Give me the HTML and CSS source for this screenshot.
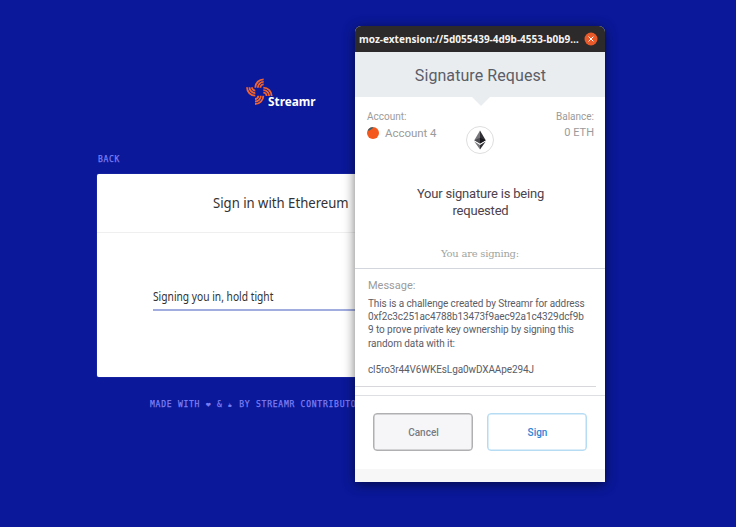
FILE: index.html
```html
<!DOCTYPE html>
<html lang="en">
<head>
<meta charset="utf-8">
<title>Sign in with Ethereum</title>
<link rel="stylesheet" href="styles.css">
</head>
<body>
<main class="page">
  <svg class="logo" viewBox="0 0 270 150" role="img" aria-label="Streamr">
    <defs>
      <g id="petal">
        <path d="M-12 -12A25 25 0 0 1 13 -37"/>
        <path d="M-4.500 -12A17.500 17.500 0 0 1 13 -29.500"/>
        <path d="M3 -12A10 10 0 0 1 13 -22"/>
      </g>
    </defs>
    <g class="logo-mark" transform="translate(73 65)">
      <use href="#petal"/>
      <use href="#petal" transform="rotate(90)"/>
      <use href="#petal" transform="rotate(180)"/>
      <use href="#petal" transform="rotate(270)"/>
    </g>
    <text class="logo-name" x="99" y="108" textLength="143" lengthAdjust="spacingAndGlyphs">Streamr</text>
  </svg>
  <a class="back">BACK</a>
  <section class="card">
    <h1 class="card-title"><span>Sign in with Ethereum</span></h1>
    <div class="card-body">
      <div class="field"><span>Signing you in, hold tight</span></div>
    </div>
  </section>
  <footer class="credits">MADE WITH <span class="glyph">❤</span> &amp; <span class="glyph cup">☕</span> BY STREAMR CONTRIBUTORS</footer>
</main>

<aside class="popup">
  <div class="titlebar">
    <span class="url">moz-extension://5d055439-4d9b-4553-b0b9…</span>
    <svg class="close" viewBox="0 0 14 14"><circle cx="7" cy="7" r="6.500"/><path d="M4.600 4.600l4.800 4.800M9.400 4.600l-4.800 4.800"/></svg>
  </div>
  <header class="heading">Signature Request</header>
  <div class="account-row">
    <div>
      <div class="label">Account:</div>
      <div class="value">
        <svg class="avatar" viewBox="0 0 12 12"><circle cx="6" cy="6" r="6" fill="#f4581c"/><path d="M1 2.800A6 6 0 0 1 6 0L5.500 1.500 1.500 4z" fill="#2d6477"/></svg>
        <span class="account-name">Account 4</span>
      </div>
    </div>
    <svg class="eth" viewBox="0 0 28 28">
      <circle cx="14" cy="14" r="13.500" fill="#fff" stroke="#dedede"/>
      <path d="M14 4.500L8.300 14.200 14 17.500z" fill="#77777b"/>
      <path d="M14 4.500l5.700 9.700L14 17.500z" fill="#303035"/>
      <path d="M8.300 14.200L14 11.700v5.800z" fill="#4b4b50"/>
      <path d="M14 11.700l5.700 2.500L14 17.500z" fill="#17171c"/>
      <path d="M8.300 15.600L14 18.900v4.600z" fill="#77777b"/>
      <path d="M19.700 15.600L14 18.900v4.600z" fill="#303035"/>
    </svg>
    <div class="balance">
      <div class="label">Balance:</div>
      <div class="value">0 ETH</div>
    </div>
  </div>
  <h2 class="headline">Your signature is being<br>requested</h2>
  <p class="signing">You are signing:</p>
  <section class="message">
    <h3>Message:</h3>
    <p>This is a challenge created by Streamr for address<br><span class="hash">0xf2c3c251ac4788b13473f9aec92a1c4329dcf9b</span><br><span class="wide">9 to prove private key ownership by signing this<br>random data with it:</span><br><br><span class="token">cl5ro3r44V6WKEsLga0wDXAApe294J</span></p>
  </section>
  <div class="actions">
    <button class="btn cancel">Cancel</button>
    <button class="btn sign">Sign</button>
  </div>
</aside>
</body>
</html>
```
FILE: styles.css
```css
* { box-sizing: border-box; }
body {
  margin: 0;
  width: 736px;
  height: 527px;
  overflow: hidden;
  background: #0a1899;
  font-family: Roboto, sans-serif;
}
h1, h2, h3, p { margin: 0; font-weight: 400; }

.page {
  width: 368px;
  margin-left: 97px;
  padding-top: 70px;
  font-family: "Noto Sans", sans-serif;
}
.logo { display: block; width: 90px; height: 50px; margin-left: 138px; }
.logo-mark { fill: none; stroke: #ef6330; stroke-width: 5.600; }
.logo-name { font: 700 38px "Noto Sans", sans-serif; fill: #fff; }
.back {
  display: block;
  margin: 35px 0 0 1px;
  height: 19px;
  font: 8px/10px "DejaVu Sans Mono", monospace;
  letter-spacing: 0.700px;
  color: #7b7df2;
  -webkit-text-stroke: 0.250px #7b7df2;
}
.card {
  height: 203px;
  background: #fff;
  border-radius: 2px;
  box-shadow: 0 0 1px #7c84d8;
}
.card-title {
  height: 59px;
  padding-left: 116px;
  border-bottom: 1px solid #efefef;
  font-size: 14px;
  line-height: 58px;
  color: #323232;
  white-space: nowrap;
}
.card-title span, .field span { display: inline-block; transform-origin: left; }
.card-title span { transform: scaleX(0.938); }
.card-body { padding: 53px 56px 0; }
.field {
  height: 25px;
  border-bottom: 2px solid #a1acdf;
  font-size: 12px;
  line-height: 22px;
  color: #323232;
  white-space: nowrap;
}
.field span { transform: scaleX(0.853); }
.credits {
  margin: 22px 0 0 53px;
  font: 8px/12px "DejaVu Sans Mono", monospace;
  letter-spacing: 0.760px;
  color: #7b7df2;
  -webkit-text-stroke: 0.250px #7b7df2;
  white-space: nowrap;
}
.glyph { display: inline-block; width: 5.600px; font-size: 8px; }
.cup { font-size: 6px; }

.popup {
  position: absolute;
  left: 355px;
  top: 26px;
  width: 250px;
  height: 456px;
  background: #fff;
  border-radius: 6px 6px 0 0;
  border-bottom: 13px solid #f7f7f7;
  box-shadow: 0 2px 12px rgba(0, 0, 0, 0.550);
}
.titlebar {
  display: flex;
  align-items: center;
  justify-content: space-between;
  height: 26px;
  padding: 0 7px 0 4px;
  border-radius: 6px 6px 0 0;
  background: #2c2a2a;
}
.url {
  font: 700 10px/26px "Noto Sans", sans-serif;
  color: #f4f4f4;
  white-space: nowrap;
}
.close { width: 14px; height: 14px; fill: #e95a2b; stroke: none; }
.close path { stroke: #fff; stroke-width: 1; }
.heading {
  position: relative;
  height: 45px;
  padding-left: 1px;
  background: #e9edf0;
  text-align: center;
  font-size: 16px;
  line-height: 48px;
  letter-spacing: 0.080px;
  color: #5b5d67;
}
.heading::after {
  content: "";
  position: absolute;
  top: 44px;
  left: 116px;
  border: 10px solid transparent;
  border-top-color: #e9edf0;
  border-bottom: 0;
}
.account-row {
  display: grid;
  grid-template-columns: 1fr 28px 1fr;
  height: 71px;
  padding: 12px 12px 0;
  color: #9b9b9b;
}
.label { font-size: 10px; line-height: 16px; }
.value { display: flex; align-items: center; font-size: 11.500px; line-height: 16px; }
.account-name { letter-spacing: -0.050px; }
.avatar { width: 12px; height: 12px; margin-right: 6px; }
.balance { text-align: right; margin-right: -1px; }
.balance .value { justify-content: flex-end; font-size: 11px; }
.eth { width: 28px; height: 28px; margin-top: 17px; }
.headline {
  height: 74px;
  padding: 17px 0 0 1px;
  text-align: center;
  font-size: 13px;
  line-height: 17px;
  letter-spacing: -0.200px;
  color: #4d424d;
}
.signing {
  height: 26px;
  text-align: center;
  font: 10px/23px "DejaVu Serif", serif;
  letter-spacing: -0.250px;
  color: #a0a59e;
}
.message {
  height: 119px;
  margin-right: 9px;
  padding: 9px 0 0 13px;
  border-bottom: 1px solid #d8d8dc;
  position: relative;
  white-space: nowrap;
}
.message::before {
  content: "";
  position: absolute;
  top: 0;
  left: 0;
  width: 250px;
  height: 1px;
  background: #d3d6dc;
}
.message h3 { font-size: 11px; line-height: 18px; color: #9b9b9b; }
.message p {
  padding-top: 2px;
  font-size: 10px;
  line-height: 13.200px;
  letter-spacing: -0.110px;
  color: #5b5d67;
}
.wide { letter-spacing: -0.070px; }
.actions {
  display: flex;
  gap: 14px;
  margin-top: 8px;
  padding: 17px 18px 0;
  border-top: 1px solid #dedfe3;
}
.btn {
  width: 100px;
  height: 38px;
  padding: 0 0 0 1px;
  border: 1.500px solid #b5dcf3;
  border-radius: 4px;
  background: #fff;
  font: 500 10px Roboto, sans-serif;
  color: #2f83d4;
  box-shadow: inset 0 0 0 0.500px #b5dcf3;
}
.cancel { border-color: #b0b0b3; background: #f6f6f8; color: #777b84; box-shadow: inset 0 0 0 0.500px #b0b0b3; }
```
